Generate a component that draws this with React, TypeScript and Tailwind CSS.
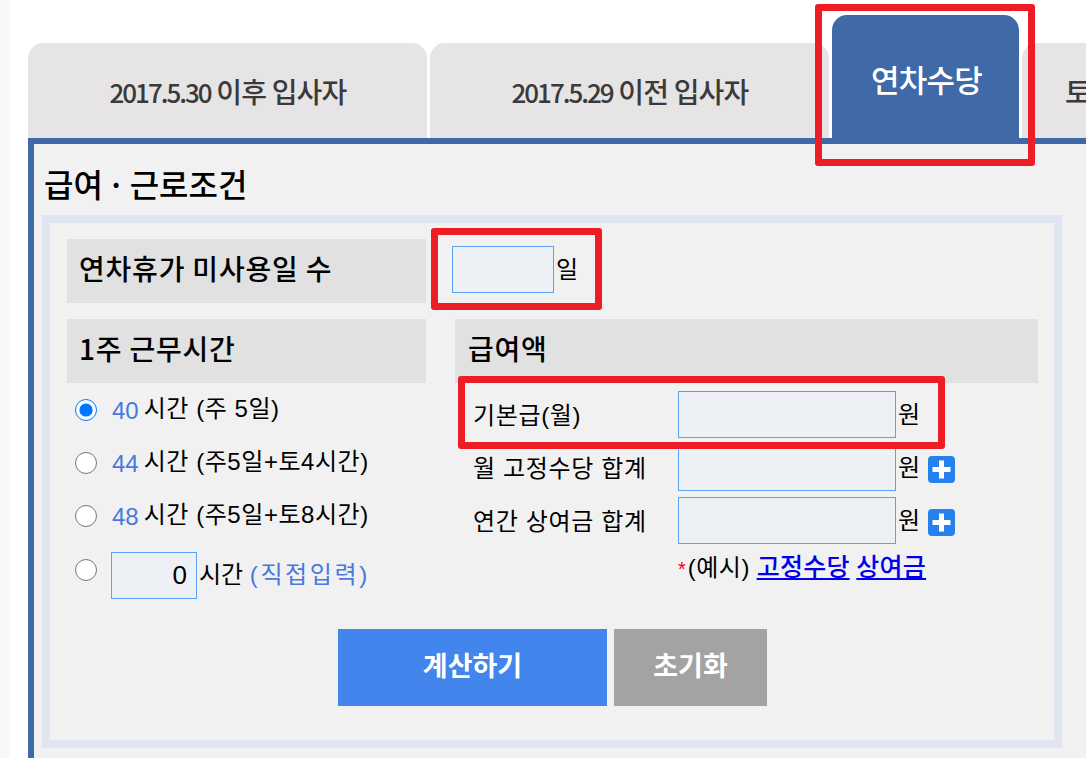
import React from "react";

const KR = '"Noto Sans CJK KR", sans-serif';
const BODY = '"Liberation Sans", "Noto Sans CJK KR", sans-serif';

function Tab({ w, digits, children }: { w: string; digits: string; children: React.ReactNode }) {
  return (
    <div className={`flex h-[95px] ${w} shrink-0 items-center justify-center rounded-t-[15px] bg-[#e6e4e5] pl-[1px] pt-[1px] font-medium text-[#3a3a3a]`} style={{ fontFamily: KR }}>
      <span className="whitespace-nowrap text-[28px] tracking-[-0.8px]">
        <span className="text-[26px] tracking-[-2px]">{digits}</span> {children}
      </span>
    </div>
  );
}

function HourRow({ hours, note, checked }: { hours: string; note: string; checked?: boolean }) {
  return (
    <div className="flex h-[53px] items-center">
      <input type="radio" name="hours" defaultChecked={checked} className="mb-[1px] ml-[8px] h-[22px] w-[22px] shrink-0 accent-[#0075ff]" />
      <span className="ml-[15px] whitespace-nowrap text-[24px] leading-none text-[#4a78dd]">{hours}</span>
      <span className="mb-[3px] ml-[5px] whitespace-nowrap text-[24px] leading-none tracking-[0.55px] text-black">시간 {note}</span>
    </div>
  );
}

function Plus() {
  return (
    <svg width="27" height="27" viewBox="0 0 27 27" className="ml-[8px] mt-[3px] shrink-0">
      <rect width="27" height="27" rx="4" fill="#2680ee" />
      <path d="M13.5 4.5v18M4.5 13.5h18" stroke="#fff" strokeWidth="5" />
    </svg>
  );
}

function MoneyRow({ label, plus }: { label: string; plus?: boolean }) {
  return (
    <div className="flex h-[47px] items-center">
      <span className="ml-[18px] w-[205px] whitespace-nowrap pt-[2px] text-[24px] leading-none tracking-[0.65px] text-black">{label}</span>
      <input readOnly className="h-[47px] w-[218px] border border-[#5aa2f5] bg-[#edf0f5]" />
      <span className="ml-[2px] text-[24px] leading-none text-black">원</span>
      {plus && <Plus />}
    </div>
  );
}

const heading = "flex h-[64px] items-center bg-[#e1e1e1] pb-[6px] text-[28px] font-medium tracking-[0.8px] text-black";

export default function App() {
  return (
    <div className="relative flex h-[758px] w-[1086px] overflow-hidden bg-white" style={{ fontFamily: BODY }}>
      <div className="w-[10px] shrink-0 bg-[#f7f7f7]" />
      <div className="ml-[18px] flex min-w-0 flex-1 flex-col">
        <div className="flex h-[138px] shrink-0 items-end gap-[3px]">
          <Tab w="w-[399px]" digits="2017.5.30">이후 입사자</Tab>
          <Tab w="w-[399px]" digits="2017.5.29">이전 입사자</Tab>
          <div className="flex h-[123px] w-[187px] shrink-0 items-center justify-center rounded-t-[15px] bg-[#4069a8] pl-[2px] pt-[6px] text-[31px] font-medium tracking-[-0.8px] text-white" style={{ fontFamily: KR }}>연차수당</div>
          <div className="flex h-[95px] w-[100px] shrink-0 items-center rounded-t-[15px] bg-[#e6e4e5] pl-[43px] pt-[1px] text-[28px] font-medium text-[#3a3a3a]" style={{ fontFamily: KR }}>토</div>
        </div>
        <div className="flex-1 border-l-[6px] border-t-[6px] border-[#4069a8] bg-[#f1f1f1]">
          <h2 className="ml-[10px] flex h-[71px] items-center whitespace-nowrap pt-[6px] text-[32px] font-medium text-black [word-spacing:-3px]" style={{ fontFamily: KR }}>
            급여 · 근로조건
          </h2>
          <div className="ml-[8px] h-[533px] w-[1020px] border-[8px] border-[#e1e5f1] pl-[17px] pt-[16px]">
            <div className="flex">
              <div className={`${heading} w-[359px] pl-[12px]`} style={{ fontFamily: KR }}>연차휴가 미사용일 수</div>
              <div className="ml-[26px] mt-[7px] flex h-[47px] items-center">
                <input readOnly className="h-[47px] w-[102px] border border-[#5aa2f5] bg-[#edf0f5]" />
                <span className="ml-[2px] text-[24px] leading-none text-black">일</span>
              </div>
            </div>
            <div className="mt-[16px] flex">
              <div className="w-[359px]">
                <div className={`${heading} pl-[12px]`} style={{ fontFamily: KR }}>1주 근무시간</div>
                <div className="mt-[1px]">
                  <HourRow hours="40" note="(주 5일)" checked />
                  <HourRow hours="44" note="(주5일+토4시간)" />
                  <HourRow hours="48" note="(주5일+토8시간)" />
                  <div className="mt-[9px] flex items-start">
                    <input type="radio" name="hours" className="ml-[8px] mt-[7px] h-[22px] w-[22px] shrink-0 accent-[#0075ff]" />
                    <input readOnly value="0" className="ml-[14px] h-[47px] w-[86px] border border-[#5aa2f5] bg-[#edf0f5] pr-[9px] text-right text-[26px] text-black" />
                    <span className="ml-[2px] mt-[11px] whitespace-nowrap text-[24px] leading-none text-black">
                      시간 <span className="tracking-[2.6px] text-[#4a78dd]">(직접입력)</span>
                    </span>
                  </div>
                </div>
              </div>
              <div className="ml-[29px] w-[583px]">
                <div className={`${heading} pl-[13px]`} style={{ fontFamily: KR }}>급여액</div>
                <div className="mt-[8px] flex flex-col gap-[6px]">
                  <MoneyRow label="기본급(월)" />
                  <MoneyRow label="월 고정수당 합계" plus />
                  <MoneyRow label="연간 상여금 합계" plus />
                </div>
                <div className="ml-[223px] mt-[6px] whitespace-nowrap text-[24px] leading-[35px] text-black">
                  <span className="mr-[2px] align-middle text-[20px] text-[#ff0000]">*</span>
                  <span className="tracking-[0.5px]">(예시)</span>{" "}
                  <a className="text-[25px] font-medium tracking-[0.25px] text-[#0000ee] underline" href="#">고정수당</a>{" "}
                  <a className="text-[25px] font-medium tracking-[0.25px] text-[#0000ee] underline" href="#">상여금</a>
                </div>
              </div>
            </div>
            <div className="ml-[271px] mt-[30px] flex gap-[7px]" style={{ fontFamily: KR }}>
              <button className="h-[77px] w-[269px] bg-[#4285ec] pb-[4px] text-[27px] font-bold text-white">계산하기</button>
              <button className="h-[77px] w-[153px] bg-[#a3a3a3] pb-[4px] text-[27px] font-bold text-white">초기화</button>
            </div>
          </div>
        </div>
      </div>
      <div className="pointer-events-none absolute left-[815px] top-[4px] h-[162px] w-[220px] rounded-[3px] border-[7px] border-[#ee1c25]" />
      <div className="pointer-events-none absolute left-[431px] top-[228px] h-[82px] w-[171px] rounded-[3px] border-[7px] border-[#ee1c25]" />
      <div className="pointer-events-none absolute left-[458px] top-[376px] h-[73px] w-[487px] rounded-[3px] border-[7px] border-[#ee1c25]" />
    </div>
  );
}
